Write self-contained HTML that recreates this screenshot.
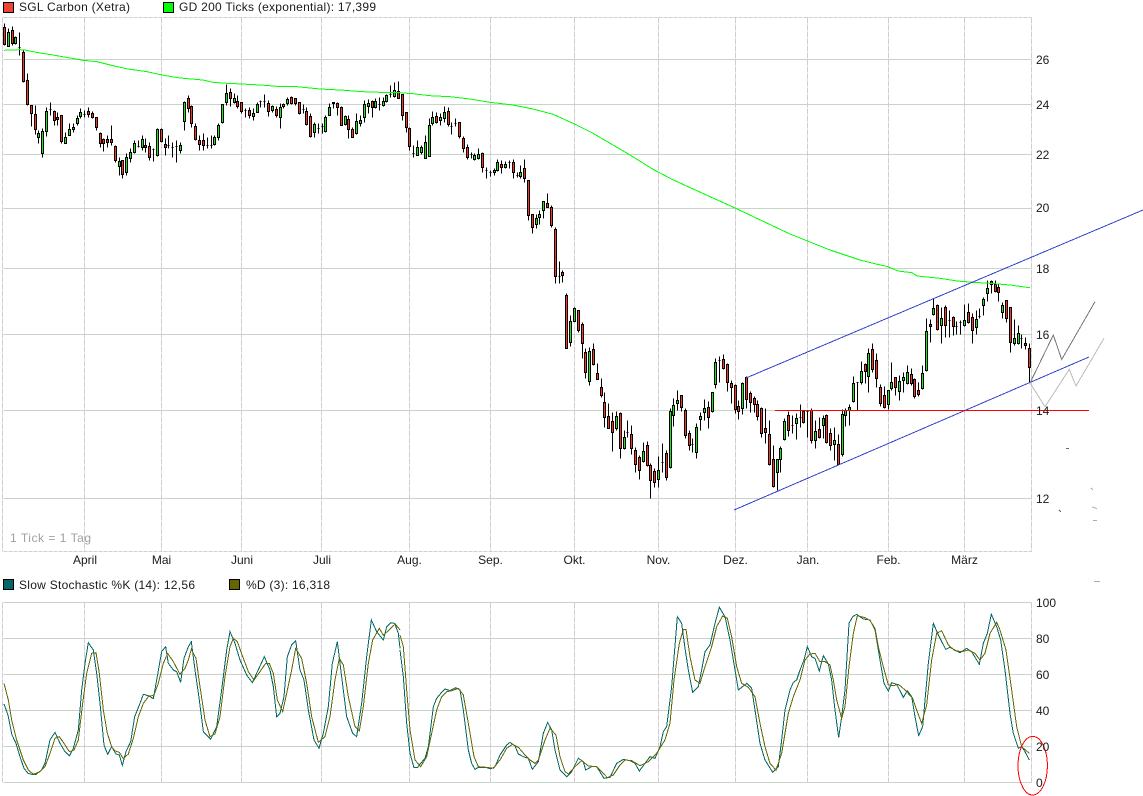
<!DOCTYPE html>
<html>
<head>
<meta charset="utf-8">
<title>SGL Carbon Chart</title>
<style>
html,body{margin:0;padding:0;background:#fff;width:1143px;height:796px;overflow:hidden}
svg{display:block}
text{font-family:"Liberation Sans",Arial,sans-serif;font-size:12px;fill:#1a1a1a}
</style>
</head>
<body>
<svg width="1143" height="796" viewBox="0 0 1143 796" xmlns="http://www.w3.org/2000/svg">
<rect width="1143" height="796" fill="#fff"/>
<!-- main grid -->
<g transform="translate(.5 .5)" shape-rendering="crispEdges" fill="none">
<path stroke="#c8d4c8" d="M3 59H1031M3 104H1031M3 154H1031M3 208H1031M3 268H1031M3 334H1031M3 410H1031M3 498H1031"/>
<path stroke="#d0d0d0" stroke-dasharray="4 1" d="M3 17H1031M3 551H1031"/>
<path stroke="#d2ccd2" stroke-dasharray="6 1" d="M2 17V551M84 17V551M161 17V551M241 17V551M321 17V551M409 17V551M490 17V551M574 17V551M658 17V551M735 17V551M807 17V551M888 17V551M964 17V551M1031 17V551"/>
<!-- stochastic grid -->
<path stroke="#c8d4c8" d="M3 602H1031M3 638H1031M3 674H1031M3 710H1031M3 746H1031M3 782H1031"/>
<path stroke="#d2ccd2" stroke-dasharray="6 1" d="M2 602V782M84 602V782M161 602V782M241 602V782M321 602V782M409 602V782M490 602V782M574 602V782M658 602V782M735 602V782M807 602V782M888 602V782M964 602V782M1031 602V782"/>
</g>
<!-- wicks -->
<path transform="translate(.5 .5)" shape-rendering="crispEdges" fill="none" stroke="#000" d="M4 23V45M8 28V46M12 26V45M15 36V44M19 32V55M23 50V82M27 73V105M31 105V126M35 105V134M38 130V143M42 128V157M46 107V136M50 102V115M54 110V125M57 112V125M61 115V143M65 132V143M69 123V135M73 123V132M77 115V125M80 108V118M84 110V117M88 107V117M92 111V118M96 117V130M100 132V147M103 138V151M107 135V147M111 125V145M115 145V162M119 157V175M122 160V178M126 153V175M130 148V162M134 140V153M138 140V147M142 135V150M145 138V152M149 142V160M153 148V161M157 128V156M161 128V142M165 138V155M168 135V148M172 142V157M176 140V162M180 142V153M184 101V130M188 95V112M191 105V127M195 123V140M199 135V150M203 133V150M207 137V148M211 135V148M214 135V145M218 123V140M222 104V123M226 84V105M230 88V106M234 93V103M237 95V108M241 102V113M245 108V117M249 107V118M253 108V120M257 102V112M260 100V107M264 94V107M268 100V116M272 105V112M276 106V117M280 103V128M283 103V108M287 97V105M291 96V104M295 98V105M299 102V114M303 104V113M306 107V125M310 113V137M314 122V137M318 123V133M322 123V133M325 115V132M329 103V115M333 102V108M337 102V115M341 106V125M345 115V125M348 115V138M352 127V137M356 113V134M360 115V126M364 100V122M368 99V113M372 100V117M375 98V108M379 97V110M383 97V106M386 94V102M390 85V97M394 82V97M398 81V98M402 94V120M406 112V132M409 127V150M413 145V157M417 140V155M421 145V154M425 135V158M429 118V156M432 111V125M436 112V123M440 113V125M444 106V122M448 107V126M451 122V134M455 118V126M459 122V138M463 136V152M467 144V159M471 152V158M474 153V160M478 148V159M482 152V172M486 167V178M490 170V176M494 168V175M497 159V171M501 160V173M505 161V168M509 160V168M513 159V178M517 172V177M520 165V178M524 159V182M528 180V220M532 214V233M536 214V228M539 210V224M543 201V218M547 193V207M551 205V227M555 227V283M559 261V283M562 270V282M566 293V348M570 315V346M574 307V321M578 310V332M582 322V358M585 348V378M589 347V385M593 343V365M597 363V379M601 378V397M604 392V427M608 403V428M612 412V451M616 411V430M620 412V458M624 430V449M627 420V437M631 425V454M635 447V472M639 455V479M643 442V462M647 441V466M650 463V498M654 468V487M658 456V487M662 443V472M666 450V480M670 408V468M673 398V426M677 390V410M681 395V411M685 408V438M689 430V450M692 438V452M696 423V458M700 412V430M704 399V420M708 401V428M712 392V412M715 358V388M719 356V382M723 354V369M727 363V391M731 380V403M735 384V413M738 400V419M742 382V414M746 376V408M750 391V412M754 396V412M757 400V420M761 407V437M765 408V443M769 420V465M773 445V487M777 459V490M780 446V472M784 418V440M788 411V436M792 415V433M796 413V439M800 404V427M803 410V423M807 410V437M811 408V443M815 420V448M819 417V438M823 415V438M826 414V443M830 428V450M834 427V460M838 434V465M842 409V456M845 408V426M849 404V425M853 376V402M857 382V410M861 361V384M865 363V383M868 348V392M872 343V372M876 353V387M880 384V406M884 386V408M888 390V409M891 362V390M895 377V395M899 375V400M903 372V392M907 365V384M911 368V385M914 378V398M918 382V396M922 365V389M926 318V371M930 319V342M933 298V315M937 304V330M941 307V343M945 305V337M949 310V337M953 316V335M956 321V334M960 320V334M964 304V326M968 303V323M972 313V343M976 310V334M979 308V318M983 297V315M987 280V301M991 280V293M995 280V292M998 283V301M1002 302V318M1006 300V322M1010 307V352M1014 319V345M1018 325V344M1021 334V348M1025 337V349M1029 343V383"/>
<!-- red bodies -->
<path transform="translate(-.5 .5)" shape-rendering="crispEdges" fill="#ff3322" stroke="#000" d="M4 27h2V44h-2zM12 30h2V43h-2zM23 52h2V81h-2zM27 80h2V104h-2zM31 105h2V113h-2zM35 114h2V129h-2zM54 111h2V120h-2zM57 117h2V119h-2zM61 115h2V141h-2zM88 111h2V114h-2zM92 113h2V117h-2zM96 117h2V127h-2zM100 133h2V143h-2zM103 139h2V143h-2zM107 139h2V142h-2zM111 139h2V142h-2zM115 146h2V160h-2zM122 160h2V174h-2zM145 145h2V147h-2zM149 146h2V157h-2zM161 129h2V141h-2zM165 144h2V147h-2zM188 98h2V108h-2zM191 106h2V123h-2zM195 126h2V139h-2zM199 140h2V144h-2zM203 140h2V145h-2zM230 92h2V98h-2zM237 101h2V106h-2zM241 102h2V111h-2zM249 110h2V115h-2zM268 103h2V111h-2zM276 109h2V115h-2zM291 97h2V103h-2zM295 98h2V103h-2zM299 102h2V113h-2zM306 111h2V124h-2zM310 116h2V136h-2zM337 103h2V107h-2zM341 107h2V125h-2zM348 119h2V129h-2zM352 129h2V137h-2zM372 101h2V107h-2zM398 91h2V98h-2zM402 94h2V115h-2zM406 112h2V127h-2zM409 128h2V146h-2zM436 116h2V122h-2zM448 111h2V124h-2zM459 122h2V136h-2zM463 138h2V148h-2zM467 147h2V157h-2zM482 153h2V167h-2zM501 164h2V167h-2zM513 162h2V172h-2zM524 168h2V178h-2zM528 180h2V215h-2zM532 214h2V227h-2zM547 203h2V207h-2zM551 207h2V225h-2zM555 229h2V276h-2zM562 272h2V275h-2zM566 295h2V348h-2zM578 310h2V330h-2zM582 324h2V343h-2zM585 352h2V372h-2zM593 349h2V364h-2zM597 373h2V379h-2zM601 387h2V395h-2zM604 402h2V417h-2zM608 416h2V428h-2zM612 421h2V432h-2zM620 413h2V448h-2zM631 434h2V448h-2zM635 450h2V464h-2zM639 457h2V470h-2zM647 445h2V465h-2zM650 465h2V480h-2zM654 471h2V482h-2zM666 453h2V477h-2zM681 395h2V407h-2zM685 410h2V435h-2zM689 433h2V445h-2zM708 407h2V417h-2zM723 359h2V368h-2zM727 364h2V382h-2zM731 383h2V387h-2zM735 385h2V409h-2zM738 406h2V411h-2zM746 377h2V399h-2zM750 393h2V402h-2zM754 398h2V404h-2zM757 404h2V416h-2zM761 408h2V433h-2zM765 428h2V432h-2zM769 434h2V464h-2zM773 459h2V486h-2zM788 415h2V430h-2zM803 411h2V422h-2zM811 410h2V440h-2zM819 429h2V437h-2zM826 415h2V442h-2zM830 433h2V445h-2zM838 444h2V464h-2zM865 364h2V371h-2zM872 349h2V369h-2zM876 360h2V378h-2zM880 387h2V403h-2zM884 395h2V407h-2zM895 377h2V387h-2zM911 374h2V383h-2zM914 379h2V396h-2zM918 390h2V394h-2zM930 324h2V326h-2zM937 305h2V329h-2zM945 307h2V325h-2zM953 317h2V326h-2zM968 312h2V322h-2zM972 317h2V330h-2zM991 281h2V284h-2zM995 284h2V291h-2zM998 287h2V292h-2zM1006 300h2V318h-2zM1010 307h2V342h-2zM1025 343h2V345h-2zM1029 348h2V367h-2z"/>
<!-- green bodies -->
<path transform="translate(-.5 .5)" shape-rendering="crispEdges" fill="#11ee11" stroke="#000" d="M8 32h2V46h-2zM15 37h2V43h-2zM38 133h2V137h-2zM42 131h2V153h-2zM46 111h2V131h-2zM65 137h2V143h-2zM69 129h2V135h-2zM73 127h2V129h-2zM77 118h2V123h-2zM80 112h2V116h-2zM119 161h2V166h-2zM126 157h2V172h-2zM130 152h2V158h-2zM134 143h2V152h-2zM142 139h2V147h-2zM157 129h2V155h-2zM180 145h2V150h-2zM184 102h2V121h-2zM214 137h2V144h-2zM218 125h2V137h-2zM222 104h2V122h-2zM226 93h2V102h-2zM234 98h2V102h-2zM253 113h2V116h-2zM257 104h2V112h-2zM272 106h2V110h-2zM280 107h2V117h-2zM283 104h2V106h-2zM287 99h2V103h-2zM314 124h2V132h-2zM325 117h2V131h-2zM329 107h2V115h-2zM333 102h2V103h-2zM345 116h2V124h-2zM356 121h2V133h-2zM360 120h2V123h-2zM364 104h2V117h-2zM368 103h2V106h-2zM375 101h2V107h-2zM383 101h2V105h-2zM386 95h2V101h-2zM394 90h2V96h-2zM417 147h2V155h-2zM421 147h2V152h-2zM425 142h2V158h-2zM429 125h2V156h-2zM432 117h2V123h-2zM440 117h2V120h-2zM444 112h2V118h-2zM474 155h2V159h-2zM478 154h2V158h-2zM494 170h2V172h-2zM497 162h2V170h-2zM505 164h2V167h-2zM520 172h2V176h-2zM536 218h2V224h-2zM539 214h2V217h-2zM543 201h2V210h-2zM570 321h2V342h-2zM574 308h2V321h-2zM589 351h2V381h-2zM616 416h2V428h-2zM624 437h2V448h-2zM643 451h2V461h-2zM658 470h2V479h-2zM670 411h2V467h-2zM673 405h2V415h-2zM677 400h2V403h-2zM696 427h2V452h-2zM700 416h2V419h-2zM704 408h2V412h-2zM712 392h2V411h-2zM715 362h2V384h-2zM742 383h2V408h-2zM777 459h2V472h-2zM780 448h2V459h-2zM784 421h2V439h-2zM796 418h2V423h-2zM815 431h2V440h-2zM823 418h2V425h-2zM834 440h2V444h-2zM842 414h2V454h-2zM845 410h2V415h-2zM849 407h2V410h-2zM853 383h2V401h-2zM861 371h2V382h-2zM868 353h2V376h-2zM888 390h2V404h-2zM891 382h2V388h-2zM899 381h2V391h-2zM903 377h2V380h-2zM907 372h2V383h-2zM922 373h2V388h-2zM926 331h2V370h-2zM933 308h2V314h-2zM941 318h2V325h-2zM964 320h2V325h-2zM976 319h2V327h-2zM983 299h2V305h-2zM987 288h2V293h-2zM1002 305h2V312h-2zM1014 338h2V343h-2zM1018 333h2V343h-2z"/>
<!-- doji ticks -->
<path transform="translate(-.5 .5)" shape-rendering="crispEdges" fill="none" stroke="#000" d="M19 47h2M50 109h2M84 114h2M138 146h2M153 149h2M168 145h2M172 147h2M176 146h2M207 145h2M211 145h2M245 110h2M260 101h2M264 101h2M303 109h2M318 128h2M322 126h2M379 104h2M390 94h2M413 153h2M451 126h2M455 123h2M471 154h2M486 170h2M490 172h2M509 162h2M517 175h2M559 276h2M627 432h2M662 462h2M692 444h2M719 360h2M792 425h2M800 417h2M807 411h2M857 382h2M949 320h2M956 326h2M960 322h2M979 316h2M1021 338h2"/>
<!-- GD 200 -->
<polyline fill="none" stroke="#00ff00" stroke-width="1" shape-rendering="crispEdges" points="4,50.3 12,50 20,49.7 25,50 33,51.7 42,53.3 53,55 70,58 83,60.3 97,61.7 113,65.7 128,69 147,71.7 162,75 180,78 203,80 213,82.3 227,83.3 242,84 260,85 277,86.3 297,86.7 320,89 340,90 363,91.7 380,92.3 400,92.7 413,93.7 430,95.7 450,96.7 470,99 490,102.3 513,105 533,109 553,114.3 573,123.3 593,133.3 613,145 630,155 653,169.3 670,178.3 680,183 735,208 790,234 830,250 860,260 873,263.3 888,266.7 898,271 912,272.7 917,276 940,278.3 957,281 973,282.3 990,283.3 1010,285 1030,287.7"/>
<!-- trend lines -->
<g fill="none" stroke-width="1" shape-rendering="crispEdges">
<path stroke="#3344cc" d="M746 378L1143 210M734 510L1089 357"/>
<path stroke="#777" d="M1030 383L1053.3 335L1061.7 359.5L1095 301.7"/>
<path stroke="#bbb" d="M1030 383L1045 406.7L1069.3 369.3L1076 386L1104 338.3"/>
<path stroke="#ff0000" d="M775 410.5H1089"/>
<path stroke="#666" d="M1066 448.5h3"/>
<path stroke="#aaa" d="M1091 488l2 2M1092 507l5 1.5M1093 520.5h4M1094 581.5h6"/>
<path stroke="#666" d="M1059 510l2 2"/>
</g>
<!-- stochastic %K -->
<g fill="none" stroke="#006666" stroke-width="3" shape-rendering="crispEdges">
<polyline transform="translate(0 530) scale(.33333)" points="12,522 24,555 36,615 48,640 60,680 72,715 84,730 96,733 108,733 125,720 135,700 150,630 165,607 180,640 195,665 208,678 220,655 235,600 245,480 255,400 265,338 280,360 290,430 300,520 312,645 323,673 335,650 348,672 358,675 367,706 378,665 392,635 404,560 418,525 430,493 445,497 460,506 470,450 485,365 497,350 505,400 520,420 530,425 542,457 552,385 565,350 574,335 585,420 598,510 610,605 632,628 650,590 665,480 680,360 690,305 705,340 720,390 740,435 757,458 770,430 793,380 810,420 820,470 830,560 840,550 852,500 862,380 875,345 887,332 900,420 912,450 925,540 942,630 957,655 970,610 985,530 997,400 1012,335 1025,440 1040,560 1058,610 1070,620 1085,520 1100,380 1114,270 1130,305 1150,330 1160,290 1172,278 1184,280 1195,310 1200,355"/>
<polyline transform="translate(400 590) scale(.33333)" points="0,180 10,260 20,400 30,490 42,533 52,533 62,520 75,505 85,470 100,350 110,325 125,307 135,297 150,302 167,293 180,300 190,360 205,480 215,520 225,538 235,532 260,533 272,537 285,530 300,495 320,465 330,457 345,468 355,492 370,500 385,505 397,538 415,515 430,430 443,397 455,420 465,480 480,540 500,560 515,545 535,505 550,515 557,540 575,530 590,530 612,565 630,562 650,520 670,508 690,512 705,520 718,543 735,520 750,500 765,505 780,470 790,425 800,410 815,290 832,80 845,100 855,175 865,240 878,307 895,290 905,240 915,185 930,165 945,100 958,52 975,80 990,150 1005,240 1015,300 1040,280 1055,295 1065,360 1080,460 1095,510 1118,547 1135,530 1145,450 1155,360 1170,300 1180,277 1190,270 1200,240"/>
<polyline transform="translate(780 590) scale(.33333)" points="60,240 72,210 82,170 95,200 105,205 118,243 130,197 145,222 155,270 165,360 176,443 185,380 195,300 207,100 218,80 230,73 250,87 270,90 285,120 300,210 312,280 325,303 335,278 350,283 370,322 382,302 395,320 405,380 416,437 428,410 445,220 460,100 475,135 497,178 510,172 525,180 540,188 560,175 575,185 598,223 610,160 622,130 634,73 650,110 662,150 675,240 690,370 700,430 715,475 725,470 735,485 748,510"/>
</g>
<!-- stochastic %D -->
<g fill="none" stroke="#666600" stroke-width="3" shape-rendering="crispEdges">
<polyline transform="translate(0 530) scale(.33333)" points="12,460 25,510 35,570 50,630 70,690 85,720 100,733 120,725 135,710 150,670 165,625 178,620 192,640 208,665 222,660 235,630 248,520 260,430 275,370 288,368 298,430 310,540 322,610 335,650 345,663 358,667 370,686 385,672 400,625 415,560 430,520 445,500 462,495 475,460 490,400 503,370 520,395 540,433 555,415 565,390 574,358 588,385 600,470 615,570 630,620 645,612 660,560 675,440 690,350 700,325 712,335 730,385 745,425 762,450 780,425 797,400 808,400 820,430 832,510 848,545 860,490 875,420 887,355 905,385 920,460 935,560 955,637 975,620 990,560 1005,450 1018,385 1030,405 1045,500 1065,590 1078,603 1090,530 1105,400 1118,330 1138,295 1150,316 1172,295 1186,282 1200,300"/>
<polyline transform="translate(400 590) scale(.33333)" points="0,135 10,170 20,300 30,420 45,510 62,530 80,500 95,430 110,360 125,320 140,305 155,302 175,295 190,315 205,400 222,500 235,530 260,532 280,535 300,510 320,475 337,463 355,472 375,495 390,510 405,520 415,510 435,450 450,415 468,435 480,500 495,545 505,552 525,530 545,512 565,528 590,530 605,545 622,563 640,555 660,525 675,510 695,512 720,527 745,515 770,490 795,450 810,400 822,270 838,160 850,118 858,118 870,200 885,270 900,280 915,230 935,170 950,110 968,78 982,85 995,140 1010,230 1025,280 1045,292 1065,320 1080,400 1095,470 1110,520 1128,540 1145,490 1165,370 1180,320 1200,270"/>
<polyline transform="translate(780 590) scale(.33333)" points="60,270 75,210 90,192 105,190 120,215 135,215 150,225 160,270 170,330 185,385 195,350 207,230 220,130 232,77 255,83 270,92 285,115 295,170 310,230 325,285 340,287 355,283 375,300 398,325 410,360 425,400 440,345 455,210 470,130 485,122 505,165 525,182 545,185 565,180 585,190 600,210 615,190 630,130 650,97 660,120 678,180 695,300 710,410 725,470 748,490"/>
</g>
<ellipse cx="1032.7" cy="765.7" rx="14.7" ry="29.3" fill="none" stroke="#ff0000" stroke-width="1" shape-rendering="crispEdges"/>
<!-- legends -->
<g shape-rendering="crispEdges" stroke="#000">
<rect x="3.5" y="2.5" width="10" height="10" fill="#ee4433"/>
<rect x="163.5" y="2.5" width="10" height="10" fill="#00ff00"/>
<rect x="3.5" y="579.5" width="10" height="10" fill="#006666"/>
<rect x="229.5" y="579.5" width="10" height="10" fill="#666600"/>
</g>
<text x="19" y="11" textLength="111">SGL Carbon (Xetra)</text>
<text x="179" y="11" textLength="197">GD 200 Ticks (exponential): 17,399</text>
<text x="19" y="589" textLength="176">Slow Stochastic %K (14): 12,56</text>
<text x="246" y="589" textLength="84">%D (3): 16,318</text>
<text x="10" y="542" style="fill:#a0a0a0" textLength="81">1 Tick = 1 Tag</text>
<!-- y axis -->
<text x="1036" y="64">26</text>
<text x="1036" y="109">24</text>
<text x="1036" y="159">22</text>
<text x="1036" y="212">20</text>
<text x="1036" y="273">18</text>
<text x="1036" y="339">16</text>
<text x="1036" y="415">14</text>
<text x="1036" y="503">12</text>
<text x="1036" y="607">100</text>
<text x="1036" y="643">80</text>
<text x="1036" y="679">60</text>
<text x="1036" y="715">40</text>
<text x="1036" y="751">20</text>
<text x="1036" y="787">0</text>
<!-- x axis -->
<g text-anchor="middle">
<text x="85" y="564">April</text>
<text x="161.5" y="564">Mai</text>
<text x="242" y="564">Juni</text>
<text x="322" y="564">Juli</text>
<text x="409.5" y="564">Aug.</text>
<text x="490.5" y="564">Sep.</text>
<text x="574.5" y="564">Okt.</text>
<text x="658.5" y="564">Nov.</text>
<text x="735.5" y="564">Dez.</text>
<text x="808" y="564">Jan.</text>
<text x="888.5" y="564">Feb.</text>
<text x="964.5" y="564">März</text>
</g>
</svg>
</body>
</html>
